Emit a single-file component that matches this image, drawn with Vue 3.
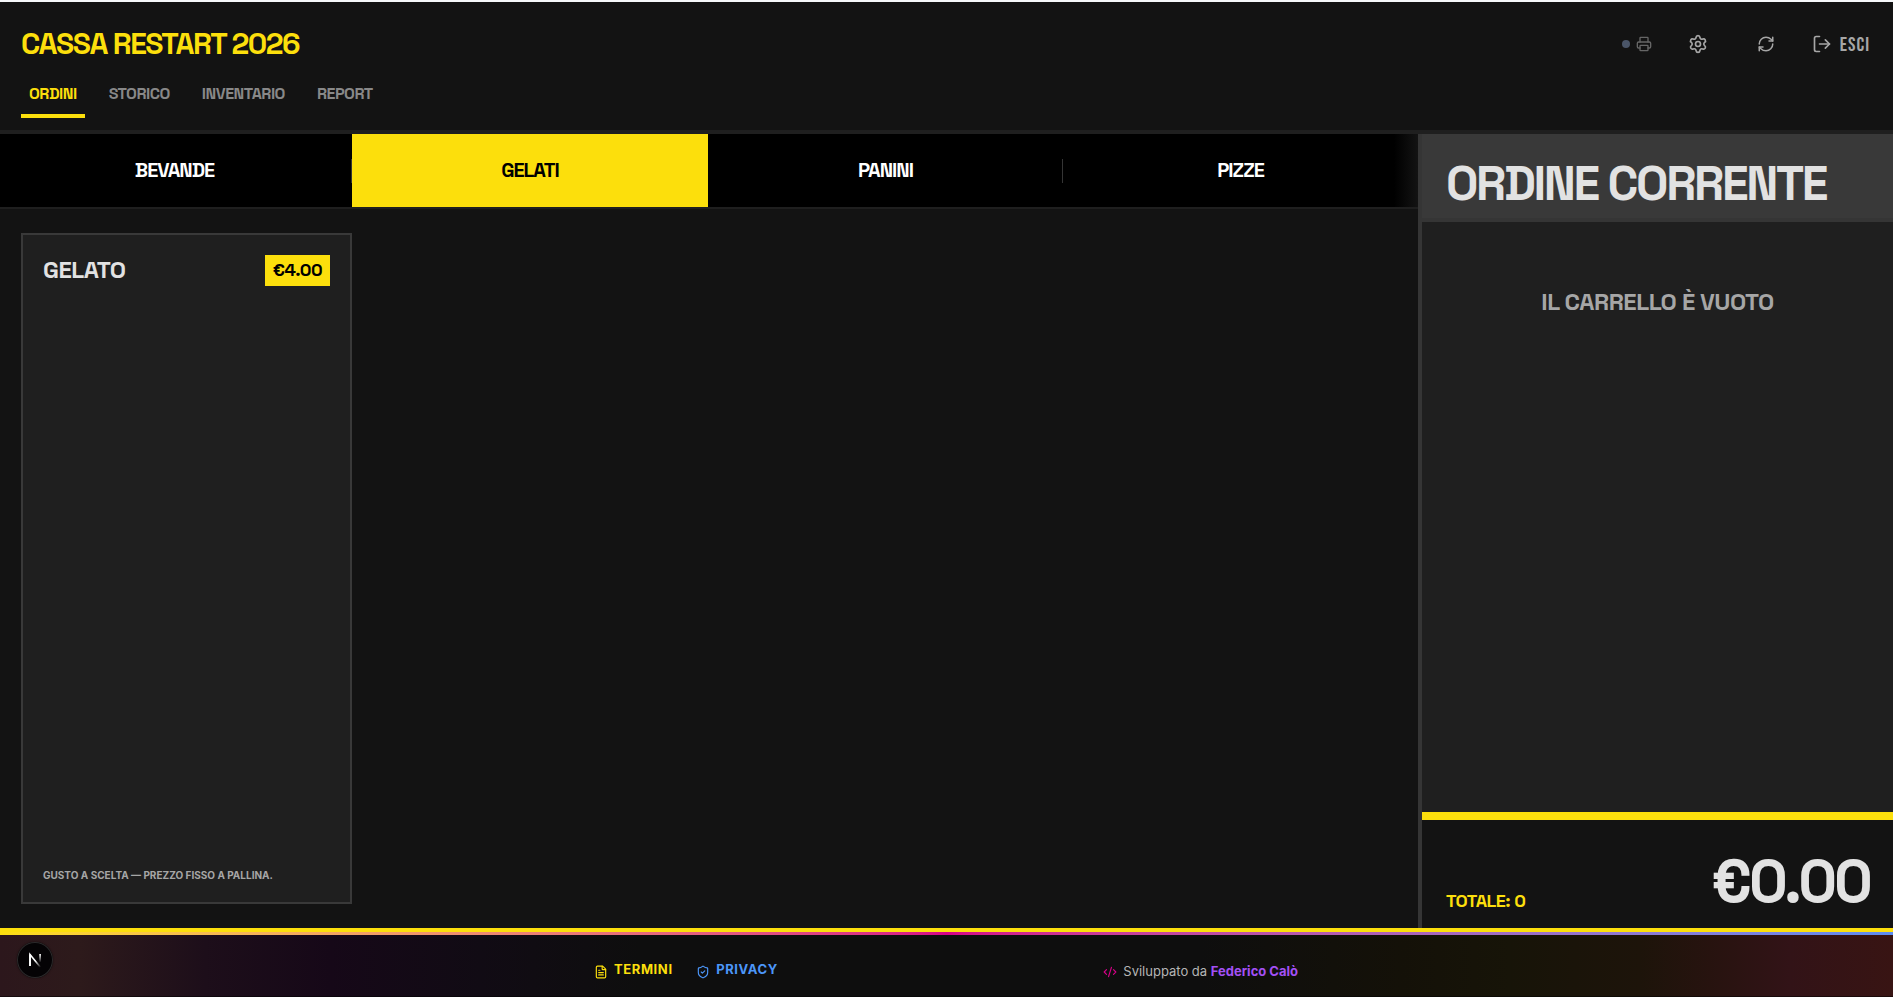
<script setup>
const sections = ['Ordini', 'Storico', 'Inventario', 'Report']
const activeSection = 'Ordini'
const categories = ['Bevande', 'Gelati', 'Panini', 'Pizze']
const activeCategory = 'Gelati'
const products = [
  { name: 'Gelato', price: 4, note: 'Gusto a scelta — prezzo fisso a pallina.' },
]
const cart = []
const total = 0
const euro = (v) => '€' + v.toFixed(2)
</script>

<template>
  <div class="page">
    <header class="top">
      <div class="top-row">
        <h1 class="brand">CASSA RESTART 2026</h1>
        <div class="tools">
          <span class="printer">
            <i class="dot"></i>
            <svg class="ico i16" viewBox="0 0 24 24"><path d="M6 18H4a2 2 0 0 1-2-2v-5a2 2 0 0 1 2-2h16a2 2 0 0 1 2 2v5a2 2 0 0 1-2 2h-2" /><path d="M6 9V3a1 1 0 0 1 1-1h10a1 1 0 0 1 1 1v6" /><rect x="6" y="14" width="12" height="8" rx="1" /></svg>
          </span>
          <button class="tool gear">
            <svg class="ico i20" viewBox="0 0 24 24"><path d="M9.671 4.136a2.34 2.34 0 0 1 4.659 0 2.34 2.34 0 0 0 3.319 1.915 2.34 2.34 0 0 1 2.33 4.033 2.34 2.34 0 0 0 0 3.831 2.34 2.34 0 0 1-2.33 4.033 2.34 2.34 0 0 0-3.319 1.915 2.34 2.34 0 0 1-4.659 0 2.34 2.34 0 0 0-3.32-1.915 2.34 2.34 0 0 1-2.33-4.033 2.34 2.34 0 0 0 0-3.831A2.34 2.34 0 0 1 6.35 6.051a2.34 2.34 0 0 0 3.319-1.915" /><circle cx="12" cy="12" r="3" /></svg>
          </button>
          <button class="tool refresh">
            <svg class="ico i18" viewBox="0 0 24 24"><path d="M3 12a9 9 0 0 1 9-9 9.75 9.75 0 0 1 6.74 2.74L21 8" /><path d="M21 3v5h-5" /><path d="M21 12a9 9 0 0 1-9 9 9.75 9.75 0 0 1-6.74-2.74L3 16" /><path d="M8 16H3v5" /></svg>
          </button>
          <button class="tool exit">
            <svg class="ico i20" viewBox="0 0 24 24"><path d="M9 21H5a2 2 0 0 1-2-2V5a2 2 0 0 1 2-2h4" /><path d="m16 17 5-5-5-5" /><path d="M21 12H9" /></svg>
            <span>ESCI</span>
          </button>
        </div>
      </div>
      <nav class="sections">
        <a v-for="s in sections" :key="s" class="section" :class="{ on: s === activeSection }">{{ s }}</a>
      </nav>
    </header>

    <div class="body">
      <main class="catalog">
        <div class="tabs">
          <button v-for="c in categories" :key="c" class="tab" :class="{ on: c === activeCategory }">{{ c }}</button>
          <div class="fade"></div>
        </div>
        <div class="products">
          <article v-for="p in products" :key="p.name" class="card">
            <div class="card-head">
              <h3>{{ p.name }}</h3>
              <span class="price">{{ euro(p.price) }}</span>
            </div>
            <p>{{ p.note }}</p>
          </article>
        </div>
      </main>

      <aside class="order">
        <h2>Ordine corrente</h2>
        <div class="empty">Il carrello è vuoto</div>
        <div class="total">
          <span class="count">Totale: {{ cart.length }}</span>
          <span class="amount">{{ euro(total) }}</span>
        </div>
      </aside>
    </div>

    <footer class="foot">
      <div class="accent"></div>
      <div class="foot-in">
        <div class="links">
          <a class="terms">
            <svg class="ico i14" viewBox="0 0 24 24"><path d="M6 22a2 2 0 0 1-2-2V4a2 2 0 0 1 2-2h8a2.4 2.4 0 0 1 1.704.706l3.588 3.588A2.4 2.4 0 0 1 20 8v12a2 2 0 0 1-2 2z" /><path d="M14 2v5a1 1 0 0 0 1 1h5" /><path d="M10 9H8" /><path d="M16 13H8" /><path d="M16 17H8" /></svg>
            <span>TERMINI</span>
          </a>
          <a class="privacy">
            <svg class="ico i14" viewBox="0 0 24 24"><path d="M20 13c0 5-3.5 7.5-7.66 8.95a1 1 0 0 1-.67-.01C7.5 20.5 4 18 4 13V6a1 1 0 0 1 1-1c2 0 4.5-1.2 6.24-2.72a1.17 1.17 0 0 1 1.52 0C14.51 3.81 17 5 19 5a1 1 0 0 1 1 1z" /><path d="m9 12 2 2 4-4" /></svg>
            <span>PRIVACY</span>
          </a>
        </div>
        <div class="credit">
          <svg class="ico i14" viewBox="0 0 24 24"><path d="m18 16 4-4-4-4" /><path d="m6 8-4 4 4 4" /><path d="m14.5 4-5 16" /></svg>
          <span>Sviluppato da <b>Federico Calò</b></span>
        </div>
      </div>
      <div class="dev-badge">
        <svg viewBox="0 0 40 40" width="40" height="40" fill="none">
          <defs>
            <linearGradient id="nDiag" x1="22" y1="20" x2="26.4" y2="26.6" gradientUnits="userSpaceOnUse"><stop stop-color="#fff" /><stop offset="1" stop-color="#fff" stop-opacity="0" /></linearGradient>
            <linearGradient id="nStem" x1="0" y1="14" x2="0" y2="22.5" gradientUnits="userSpaceOnUse"><stop stop-color="#fff" /><stop offset="1" stop-color="#fff" stop-opacity="0" /></linearGradient>
          </defs>
          <path d="M15 26V14.6L25.6 27.6" stroke="url(#nDiag)" stroke-width="1.6" />
          <path d="M15 26V14.3" stroke="#fff" stroke-width="1.7" />
          <path d="M25.1 14v9" stroke="url(#nStem)" stroke-width="1.7" />
        </svg>
      </div>
    </footer>
  </div>
</template>

<style>
html, body { background: #131313; overflow: hidden; }
</style>

<style scoped>
* { box-sizing: border-box; }
.page {
  height: 997px;
  display: flex;
  flex-direction: column;
  border-top: 2px solid #f6f8fa;
  background: #131313;
  color: #e2e2e2;
  font-family: Inter, "Liberation Sans", sans-serif;
}
h1, h2, h3, p { margin: 0; }
button { border: 0; padding: 0; background: none; font: inherit; color: inherit; }
.ico { display: block; flex: none; fill: none; stroke: currentColor; stroke-width: 2; stroke-linecap: round; stroke-linejoin: round; }
.i14 { width: 14px; height: 14px; }
.i16 { width: 16px; height: 16px; }
.i18 { width: 18px; height: 18px; }
.i20 { width: 20px; height: 20px; }

.brand, .section, .tab, .card h3, .price, .order {
  font-family: "Space Grotesk", Inter, "Liberation Sans", sans-serif;
  font-weight: 700;
  text-transform: uppercase;
}

.top { flex: none; height: 132px; padding: 20px 21px 0; border-bottom: 4px solid #1f1f1f; }
.top-row { height: 44px; display: flex; align-items: center; justify-content: space-between; }
.brand { font-size: 30px; line-height: 36px; letter-spacing: -0.05em; color: #fcdf0c; }
.tools { display: flex; align-items: center; color: #a6a6a6; padding-right: 2px; }
.printer { display: flex; align-items: center; gap: 6px; color: #666; margin-right: 36px; }
.dot { width: 8px; height: 8px; border-radius: 50%; background: #4a5568; }
.gear { margin-right: 49px; }
.refresh { margin-right: 37px; }
.exit { display: flex; align-items: center; gap: 8px; font-family: "Bebas Neue", "Open Sans Condensed", sans-serif; font-size: 20px; line-height: 28px; letter-spacing: 1px; }
.exit span { padding-top: 2px; line-height: 26px; }

.sections { display: flex; gap: 16px; }
.section {
  height: 52px;
  padding: 16px 8px 0;
  border-bottom: 4px solid transparent;
  font-size: 16px;
  line-height: 24px;
  letter-spacing: -0.5px;
  color: #888;
}
.section.on { color: #fcdf0c; border-color: #fcdf0c; }

.body { flex: 1; display: flex; min-height: 0; }
.catalog { flex: 1; display: flex; flex-direction: column; min-width: 0; }
.tabs {
  position: relative;
  flex: none;
  height: 75px;
  display: grid;
  grid-template-columns: 352px 356px 355px 355px;
  background: #000;
  border-bottom: 2px solid #1f1f1f;
}
.tab { position: relative; padding-bottom: 2px; color: #fff; font-size: 20px; line-height: 28px; letter-spacing: -0.05em; }
.tab:first-child { padding-right: 3px; }
.tab:not(:nth-child(4))::after {
  content: "";
  position: absolute;
  right: 0;
  top: 25px;
  width: 1px;
  height: 24px;
  background: #353535;
}
.tab.on { background: #fcdf0c; color: #000; }
.tab.on::after { display: none; }
.fade { position: absolute; right: 0; top: 0; width: 24px; height: 73px; background: linear-gradient(to right, transparent, #131313); }

.products { flex: 1; padding: 24px 21px; display: grid; grid-template-columns: 331px; }
.card { display: flex; flex-direction: column; justify-content: space-between; padding: 20px 20px 19px; border: 2px solid #393939; background: #1f1f1f; }
.card-head { display: flex; justify-content: space-between; align-items: flex-start; }
.card h3 { font-size: 24px; line-height: 30px; letter-spacing: -0.5px; }
.price { padding: 1px 8px 3px; background: #fcdf0c; color: #000; font-size: 18px; line-height: 27px; letter-spacing: -0.6px; }
.card p { font-size: 10px; line-height: 15px; font-weight: 700; text-transform: uppercase; color: #a6a6a6; }

.order { flex: none; width: 475px; display: flex; flex-direction: column; border-left: 4px solid #353535; background: #1f1f1f; }
.order h2 { height: 88px; padding: 26px 24px 0; border-bottom: 4px solid #353535; background: #393939; font-size: 48px; line-height: 48px; letter-spacing: -0.05em; }
.empty { flex: 1; padding-top: 64px; text-align: center; font-size: 24px; line-height: 32px; letter-spacing: -0.5px; color: #a6a6a6; }
.total { height: 116px; display: flex; align-items: flex-end; justify-content: space-between; padding: 0 23px 16px 24px; border-top: 8px solid #fcdf0c; background: #131313; }
.count { font-size: 18px; line-height: 22px; letter-spacing: -0.5px; color: #fcdf0c; }
.amount { font-size: 60px; line-height: 60px; letter-spacing: -0.05em; }

.foot {
  position: relative;
  flex: none;
  height: 69px;
  border-top: 4px solid #fcdf0c;
  box-shadow: inset 0 -1px 0 rgba(0, 0, 0, 0.5);
  background: linear-gradient(to right, #2c171c 0, #2d1a1b 80px, #1d0e1a 205px, #160818 330px, #110b14 480px, #0e0e0e 640px, #0e0e0e 1200px, #141108 1400px, #171408 1510px, #1d140a 1640px, #27130f 1710px, #321317 1790px, #381413 1893px);
}
.accent { height: 3px; background: linear-gradient(to right in oklab, #fcdf0c, #d60087, #5b8cf2); }
.foot-in { width: 705px; height: 62px; margin: 0 auto; display: flex; justify-content: space-between; font-size: 13px; line-height: 20px; }
.links { display: flex; gap: 23.5px; }
.links a { display: flex; gap: 6px; padding-top: 24px; font-weight: 700; letter-spacing: 0.6px; }
.links svg { margin-top: 6px; }
.terms { color: #fcdf0c; }
.privacy { color: #4c96f9; }
.credit { display: flex; gap: 6px; padding: 26px 1px 0 0; color: #b5b5b5; }
.credit svg { margin-top: 4px; color: #d60087; }
.credit b { color: #a350f5; font-weight: 700; }
.dev-badge {
  position: absolute;
  left: 17px;
  top: 10px;
  width: 36px;
  height: 36px;
  display: flex;
  align-items: center;
  justify-content: center;
  border-radius: 50%;
  background: #050305;
  box-shadow: inset 0 0 0 1px #2c2a2b, 0 0 2px rgba(0, 0, 0, 0.6);
}
.dev-badge svg { flex: none; }
</style>
